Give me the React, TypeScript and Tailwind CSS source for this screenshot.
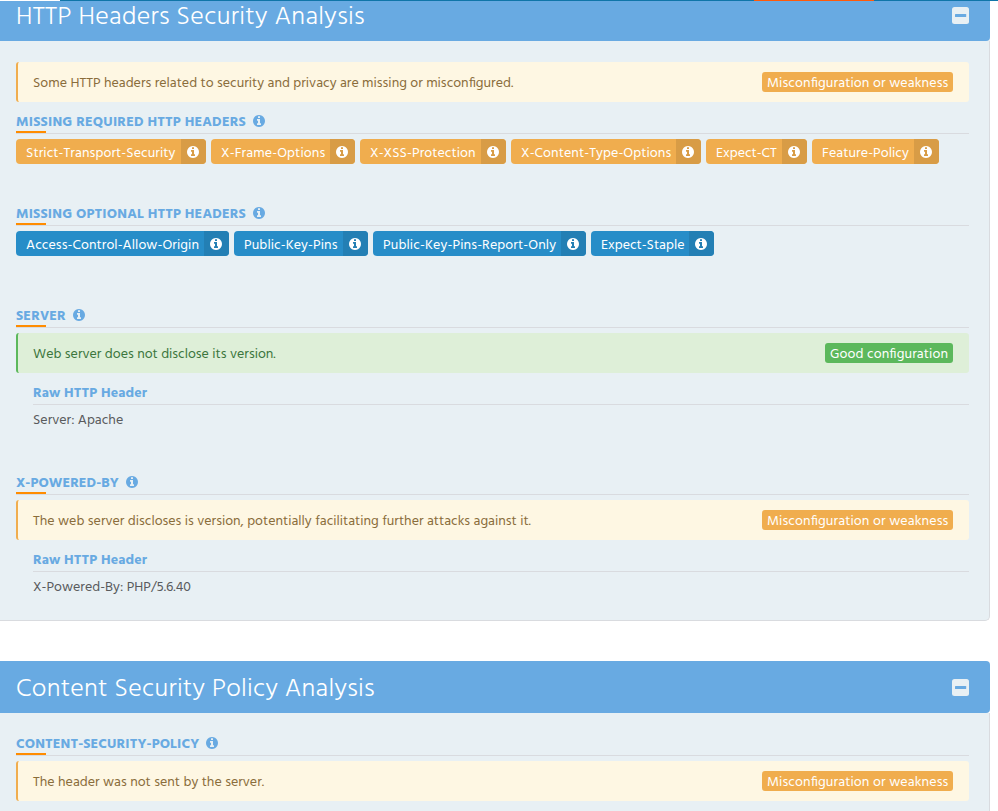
import type { ReactNode } from 'react';

function InfoIcon() {
  return (
    <svg viewBox="128 128 1536 1536" className="h-3 w-3 shrink-0" fill="currentColor">
      <path d="M1152 1376v-160q0-14-9-23t-23-9h-96v-512q0-14-9-23t-23-9h-320q-14 0-23 9t-9 23v160q0 14 9 23t23 9h96v320h-96q-14 0-23 9t-9 23v160q0 14 9 23t23 9h448q14 0 23-9t9-23zm-128-896v-160q0-14-9-23t-23-9h-192q-14 0-23 9t-9 23v160q0 14 9 23t23 9h192q14 0 23-9t9-23zm640 416q0 209-103 385.5t-279.5 279.5-385.5 103-385.5-103-279.5-279.5-103-385.5 103-385.5 279.5-279.5 385.5-103 385.5 103 279.5 279.5 103 385.5z" />
    </svg>
  );
}

function CollapseIcon() {
  return (
    <svg viewBox="0 0 17 17" className="h-[17px] w-[17px]">
      <rect width="17" height="17" rx="2.5" fill="#e8f0f4" />
      <rect x="3" y="7" width="11.2" height="3" rx="0.5" fill="#68aae2" />
    </svg>
  );
}

function PanelHeader({ title, className }: { title: string; className: string }) {
  return (
    <header className={`flex items-end bg-[#68aae2] pr-[21px] pl-4 text-white ${className}`}>
      <div className="flex h-[52px] flex-1 items-center justify-between">
        <h1 className="pt-[5px] text-[26px] leading-8 font-light">{title}</h1>
        <CollapseIcon />
      </div>
    </header>
  );
}

function SectionTitle({ text, className = '' }: { text: string; className?: string }) {
  return (
    <div className={`border-b border-[#d9dbdf] text-[#68aae2] ${className}`}>
      <h2 className="flex h-5 items-center gap-[7px] leading-5 font-bold">
        <span className="pt-[3px]">{text}</span>
        <InfoIcon />
      </h2>
      <div className="h-0.5 w-[30px] bg-[#ff8c00]" />
    </div>
  );
}

type Tone = 'warning' | 'success';

const alertTone = {
  warning: 'border-[#f0ad4e] bg-[#fef7e3] text-[#8a6d3b]',
  success: 'border-[#5cb85c] bg-[#deefd8] text-[#3c763d]',
};
const badgeTone = { warning: 'w-[191px] bg-[#f0ad4e]', success: 'w-[128px] bg-[#5cb85c]' };
const badgeText = { warning: 'Misconfiguration or weakness', success: 'Good configuration' };

function Alert({ tone = 'warning', text, className = '' }: { tone?: Tone; text: string; className?: string }) {
  return (
    <div className={`flex h-10 items-center justify-between rounded-[3px] border-l-2 pr-4 pl-[15px] leading-5 ${alertTone[tone]} ${className}`}>
      <span className="pt-[3px]">{text}</span>
      <span
        className={`h-5 rounded-[3px] px-[5px] leading-[23px] tracking-[0.11px] whitespace-nowrap text-white [font-feature-settings:'liga'_1] ${badgeTone[tone]}`}
      >
        {badgeText[tone]}
      </span>
    </div>
  );
}

function Chip({ text, size, blue = false }: { text: string; size: string; blue?: boolean }) {
  return (
    <span
      className={`flex h-[25px] justify-between overflow-hidden rounded-[4px] pl-2.5 leading-[29px] whitespace-nowrap text-white ${size} ${blue ? 'bg-[#278dc8]' : 'bg-[#f0ad4e]'}`}
    >
      <span>{text}</span>
      <span className={`flex w-[25px] shrink-0 pt-[7px] pl-1.5 ${blue ? 'bg-[#237fb4]' : 'bg-[#d89c46]'}`}>
        <InfoIcon />
      </span>
    </span>
  );
}

function RawHeader({ value }: { value: string }) {
  return (
    <div className="mt-[9px] ml-[17px]">
      <h3 className="h-[23px] border-b border-[#d9dbdf] leading-[23px] font-bold tracking-[0.12px] text-[#68aae2]">Raw HTTP Header</h3>
      <p className="mt-1 h-5 leading-[23px] text-[#595b5d]">{value}</p>
    </div>
  );
}

function Panel({ children, className }: { children: ReactNode; className: string }) {
  return <div className={`border-r border-[#d9dbdf] bg-[#e8f0f4] pr-5 pl-4 ${className}`}>{children}</div>;
}

const required = [
  { text: 'Strict-Transport-Security', size: 'w-[190px] tracking-[0.08px]' },
  { text: 'X-Frame-Options', size: 'w-[144px] tracking-[0.1px]' },
  { text: 'X-XSS-Protection', size: 'w-[146px] tracking-[0.06px]' },
  { text: 'X-Content-Type-Options', size: 'w-[190px] tracking-[0.08px]' },
  { text: 'Expect-CT', size: 'w-[101px]' },
  { text: 'Feature-Policy', size: 'w-[127px] tracking-[0.07px]' },
];

const optional = [
  { text: 'Access-Control-Allow-Origin', size: 'w-[213px] tracking-[0.07px]' },
  { text: 'Public-Key-Pins', size: 'w-[134px] tracking-[0.07px]' },
  { text: 'Public-Key-Pins-Report-Only', size: 'w-[213px] tracking-[0.11px]' },
  { text: 'Expect-Staple', size: 'w-[123px]' },
];

export default function App() {
  return (
    <div className="h-[811px] w-[998px] overflow-hidden bg-white font-['Hind','Noto_Sans',sans-serif] text-[14px]">
      <div className="flex h-px">
        <div className="w-[60px] bg-white" />
        <div className="w-[694px] bg-[#0f75a8]" />
        <div className="w-[120px] bg-[#ff5a0a]" />
        <div className="flex-1 bg-[#0f75a8]" />
      </div>

      <section className="w-[990px]">
        <div className="bg-[#e8f0f4]">
          <PanelHeader title="HTTP Headers Security Analysis" className="h-10 rounded-br-[4px] tracking-[0.3px]" />
        </div>
        <Panel className="h-[580px] rounded-br-[5px] border-b pt-[21px]">
          <Alert text="Some HTTP headers related to security and privacy are missing or misconfigured." />
          <SectionTitle text="MISSING REQUIRED HTTP HEADERS" className="mt-[9px] tracking-[0.2px]" />
          <div className="mt-[5px] flex gap-[5px]">
            {required.map((chip) => (
              <Chip key={chip.text} {...chip} />
            ))}
          </div>
          <SectionTitle text="MISSING OPTIONAL HTTP HEADERS" className="mt-[39px] tracking-[0.18px]" />
          <div className="mt-[5px] flex gap-[5px]">
            {optional.map((chip) => (
              <Chip key={chip.text} {...chip} blue />
            ))}
          </div>
          <SectionTitle text="SERVER" className="mt-[49px] tracking-[0.17px]" />
          <Alert tone="success" text="Web server does not disclose its version." className="mt-[5px]" />
          <RawHeader value="Server: Apache" />
          <SectionTitle text="X-POWERED-BY" className="mt-[43px] tracking-[0.08px]" />
          <Alert text="The web server discloses is version, potentially facilitating further attacks against it." className="mt-[5px]" />
          <RawHeader value="X-Powered-By: PHP/5.6.40" />
        </Panel>
      </section>

      <section className="mt-10 w-[990px]">
        <PanelHeader title="Content Security Policy Analysis" className="h-[52px] rounded-r-[4px] tracking-[0.24px]" />
        <Panel className="h-[98px] pt-5">
          <SectionTitle text="CONTENT-SECURITY-POLICY" className="tracking-[0.13px]" />
          <Alert text="The header was not sent by the server." className="mt-[5px]" />
        </Panel>
      </section>
    </div>
  );
}
